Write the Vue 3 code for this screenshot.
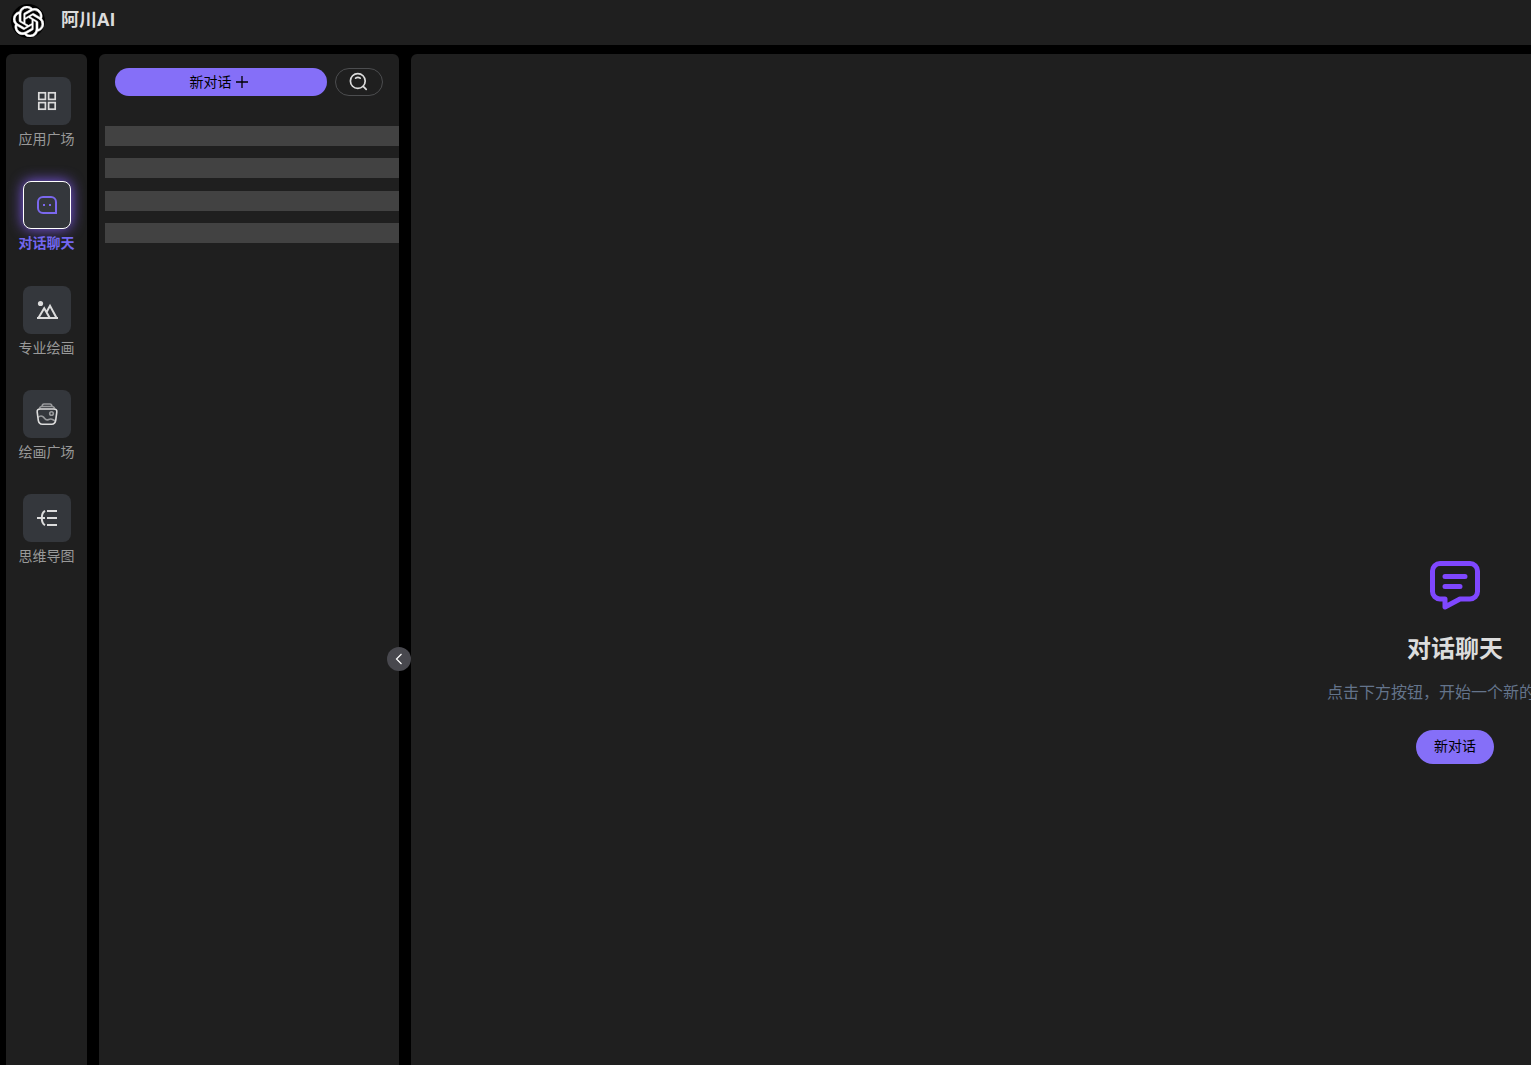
<script setup>
import {ref} from "vue"

const active=ref("chat")
const collapsed=ref(false)

const menus=[
    {key:"apps",label:"应用广场"},
    {key:"chat",label:"对话聊天"},
    {key:"draw",label:"专业绘画"},
    {key:"gallery",label:"绘画广场"},
    {key:"mind",label:"思维导图"},
]
</script>

<template>
    <div class="page">
        <header class="header">
            <span class="logo">
                <svg viewBox="0 0 24 24" width="31" height="31" fill="#fff" stroke="#fff" stroke-width="0.4">
                    <path d="M22.2819 9.8211a5.9847 5.9847 0 0 0-.5157-4.9108 6.0462 6.0462 0 0 0-6.5098-2.9A6.0651 6.0651 0 0 0 4.9807 4.1818a5.9847 5.9847 0 0 0-3.9977 2.9 6.0462 6.0462 0 0 0 .7427 7.0966 5.98 5.98 0 0 0 .511 4.9107 6.051 6.051 0 0 0 6.5146 2.9001A5.9847 5.9847 0 0 0 13.2599 24a6.0557 6.0557 0 0 0 5.7718-4.2058 5.9894 5.9894 0 0 0 3.9977-2.9001 6.0557 6.0557 0 0 0-.7475-7.0729zm-9.022 12.6081a4.4755 4.4755 0 0 1-2.8764-1.0408l.1419-.0804 4.7783-2.7582a.7948.7948 0 0 0 .3927-.6813v-6.7369l2.02 1.1686a.071.071 0 0 1 .038.052v5.5826a4.504 4.504 0 0 1-4.4945 4.4944zm-9.6607-4.1254a4.4708 4.4708 0 0 1-.5346-3.0137l.142.0852 4.783 2.7582a.7712.7712 0 0 0 .7806 0l5.8428-3.3685v2.3324a.0804.0804 0 0 1-.0332.0615L9.74 19.9502a4.4992 4.4992 0 0 1-6.1408-1.6464zM2.3408 7.8956a4.485 4.485 0 0 1 2.3655-1.9728V11.6a.7664.7664 0 0 0 .3879.6765l5.8144 3.3543-2.0201 1.1685a.0757.0757 0 0 1-.071 0l-4.8303-2.7865A4.504 4.504 0 0 1 2.3408 7.872zm16.5963 3.8558L13.1038 8.364 15.1192 7.2a.0757.0757 0 0 1 .071 0l4.8303 2.7913a4.4944 4.4944 0 0 1-.6765 8.1042v-5.6772a.79.79 0 0 0-.407-.667zm2.0107-3.0231l-.142-.0852-4.7735-2.7818a.7759.7759 0 0 0-.7854 0L9.409 9.2297V6.8974a.0662.0662 0 0 1 .0284-.0615l4.8303-2.7866a4.4992 4.4992 0 0 1 6.6802 4.66zM8.3065 12.863l-2.02-1.1638a.0804.0804 0 0 1-.038-.0567V6.0742a4.4992 4.4992 0 0 1 7.3757-3.4537l-.142.0805L8.704 5.459a.7948.7948 0 0 0-.3927.6813zm1.0976-2.3654l2.602-1.4998 2.6069 1.4998v2.9994l-2.5974 1.4997-2.6067-1.4997Z"/>
                </svg>
            </span>
            <h1 class="brand">阿川AI</h1>
        </header>

        <div class="body">
            <aside class="sidebar">
                <nav class="menu">
                    <button v-for="m in menus" :key="m.key" type="button" class="menu-item" :class="{active:active===m.key}" @click="active=m.key">
                        <span class="tile">
                            <svg v-if="m.key==='apps'" viewBox="0 0 24 24" width="24" height="24" fill="none" stroke="currentColor" stroke-width="1.7">
                                <rect x="3.8" y="3.8" width="6.6" height="6.6"/>
                                <rect x="13.6" y="3.8" width="6.6" height="6.6"/>
                                <rect x="3.8" y="13.6" width="6.6" height="6.6"/>
                                <rect x="13.6" y="13.6" width="6.6" height="6.6"/>
                            </svg>
                            <svg v-else-if="m.key==='chat'" viewBox="0 0 24 24" width="24" height="24" fill="none" stroke="currentColor" stroke-width="2">
                                <path d="M8 4h8a5 5 0 0 1 5 5v11H8a5 5 0 0 1-5-5V9a5 5 0 0 1 5-5z"/>
                                <path d="M8 12h2M14 12h2"/>
                            </svg>
                            <svg v-else-if="m.key==='draw'" viewBox="0 0 24 24" width="24" height="24" fill="none" stroke="currentColor" stroke-width="2">
                                <circle cx="5.5" cy="5.5" r="2.6" fill="currentColor" stroke="none"/>
                                <path d="M3.4 20 9.2 10.2 14.8 20M11.6 13.9 15 7.8 21.6 20M2 20h21"/>
                            </svg>
                            <svg v-else-if="m.key==='gallery'" viewBox="0 0 24 24" width="24" height="24" fill="none" stroke="currentColor" stroke-width="1.6">
                                <path d="M5.2 7h13.6c2.3 0 3.3 1.1 3 3.2l-1.1 8.2c-.4 2.6-1.5 3.8-4 3.8H7.3c-2.5 0-3.6-1.2-4-3.8L2.2 10.2C1.9 8.1 2.9 7 5.2 7z"/>
                                <g opacity="0.6">
                                    <path d="M4.5 6.5C4.8 5 5.600 4.500 7 4.500h10c1.400 0 2.200.5 2.500 2M7 4.200c.2-1.500.8-2.200 2-2.200h6c1.200 0 1.800.7 2 2.200"/>
                                    <circle cx="16.5" cy="11.5" r="1.8"/>
                                    <path d="M3 15.500c1.500-1.500 3.700-1.800 5.200-.6 1.500 1.300 2 3 3.800 3 1.500 0 2-.9 3.600-.9 1.800 0 2.600 1 4.900 2"/>
                                </g>
                            </svg>
                            <svg v-else viewBox="0 0 24 24" width="24" height="24" fill="none" stroke="currentColor" stroke-width="2">
                                <path d="M12 5h10M12 12h10M12 19h10M2 12h8"/>
                                <path d="M10 4.8C7.8 6 6.8 8.500 6.800 12s1 6 3.200 7.200"/>
                            </svg>
                        </span>
                        <span class="label">{{m.label}}</span>
                    </button>
                </nav>
            </aside>

            <section class="history" v-show="!collapsed">
                <div class="tools">
                    <button type="button" class="new-chat">
                        <span class="text">新对话</span>
                        <svg viewBox="0 0 14 14" width="14" height="14" fill="none" stroke="currentColor" stroke-width="1.3">
                            <path d="M7 1v12M1 7h12"/>
                        </svg>
                    </button>
                    <button type="button" class="search" aria-label="搜索">
                        <svg viewBox="0 0 20 20" width="20" height="20" fill="none" stroke="currentColor" stroke-width="1.7" stroke-linecap="round">
                            <circle cx="8.8" cy="9" r="7.4"/>
                            <path d="M14.2 14.4l3 3"/>
                            <path d="M6.600 6.200c1.400-1.100 3.200-1.100 4.600 0"/>
                        </svg>
                    </button>
                </div>
                <div class="skeleton">
                    <div v-for="n in 4" :key="n" class="bar"></div>
                </div>
                <button type="button" class="handle" aria-label="收起" @click="collapsed=true">
                    <svg viewBox="0 0 12 12" width="12" height="12" fill="none" stroke="currentColor" stroke-width="1.2">
                        <path d="M8.500 1 3.500 6l5 5"/>
                    </svg>
                </button>
            </section>

            <main class="content">
                <div class="stage">
                    <svg viewBox="0 0 60 60" width="60" height="60" fill="none" stroke="#7f47ff" stroke-width="5" stroke-linecap="round" stroke-linejoin="round">
                        <path d="M15 7.500h30a7.500 7.500 0 0 1 7.500 7.500v20.500a7.500 7.500 0 0 1-7.500 7.500H35L20 51V43h-5a7.500 7.500 0 0 1-7.500-7.500V15a7.500 7.500 0 0 1 7.500-7.500z"/>
                        <path d="M20 20.500h20M20 30.500h15"/>
                    </svg>
                    <h2 class="title">对话聊天</h2>
                    <p class="tip">点击下方按钮，开始一个新的对话吧</p>
                    <button type="button" class="start">新对话</button>
                </div>
            </main>
        </div>
    </div>
</template>

<style>
body{
    margin: 0;
    background: #000;
}
</style>

<style scoped>
.page{
    height: 100vh;
    display: flex;
    flex-direction: column;
    overflow: hidden;
    background: #000;
    color: #dcdcdc;
    font-family: "Open Sans","Noto Sans CJK SC",sans-serif;
}
button{
    padding: 0;
    border: none;
    background: none;
    font-family: inherit;
    font-size: 14px;
    cursor: pointer;
}
svg{
    display: block;
}
.header{
    flex: none;
    height: 45px;
    padding-left: 11px;
    display: flex;
    gap: 16px;
    background: #1f1f1f;
}
.logo{
    width: 34px;
    height: 34px;
    margin-top: 4px;
    display: flex;
    align-items: center;
    justify-content: center;
    border-radius: 50%;
    background: #000;
}
.brand{
    margin: 0;
    font-size: 18px;
    line-height: 38px;
}
.body{
    flex: 1;
    min-height: 0;
    display: flex;
    gap: 12px;
    padding: 9px 0 0 6px;
}
.sidebar,
.history,
.content{
    border-radius: 6px 6px 0 0;
    background: #1f1f1f;
}
.sidebar{
    flex: none;
    width: 81px;
    padding-top: 23px;
    box-sizing: border-box;
}
/* 菜单项在固定高度内均匀分布 */
.menu{
    height: 489px;
    display: flex;
    flex-direction: column;
    justify-content: space-between;
}
.menu-item{
    display: flex;
    flex-direction: column;
    align-items: center;
    gap: 4px;
    color: #999;
}
.tile{
    width: 48px;
    height: 48px;
    display: flex;
    align-items: center;
    justify-content: center;
    box-sizing: border-box;
    border-radius: 8px;
    background: #34373c;
    color: #dcdcdc;
}
.label{
    line-height: 20px;
}
.active .tile{
    border: 1px solid #fff;
    color: #7b68ee;
    box-shadow: 0 0 14px #7f5af0;
}
.active .label{
    color: #7367f0;
    font-weight: bold;
}
.history{
    position: relative;
    flex: none;
    width: 300px;
}
.tools{
    display: flex;
    gap: 8px;
    padding: 14px 16px 30px;
}
.new-chat{
    flex: 1;
    height: 28px;
    padding-right: 4px;
    display: flex;
    align-items: center;
    justify-content: center;
    gap: 3px;
    border-radius: 14px;
    background: #856ff8;
    color: #000;
}
.text{
    padding-bottom: 3px;
}
.search{
    width: 48px;
    height: 28px;
    display: flex;
    align-items: center;
    justify-content: center;
    border: 1px solid #4c4d4f;
    border-radius: 14px;
    color: #dcdcdc;
}
.skeleton{
    height: 117px;
    margin-left: 6px;
    display: flex;
    flex-direction: column;
    justify-content: space-between;
}
.bar{
    height: 20px;
    background: #424242;
}
.handle{
    position: absolute;
    bottom: 39%;
    right: -12px;
    width: 24px;
    height: 24px;
    display: flex;
    align-items: center;
    justify-content: center;
    border-radius: 50%;
    background: #48484e;
    color: #fff;
}
.content{
    flex: 1;
    min-width: 0;
    overflow: hidden;
    border-top-right-radius: 0;
}
/* 欢迎区比可视区域宽,右侧被裁掉 */
.stage{
    width: calc(200% - 152px);
    height: calc(120% - 2px);
    display: flex;
    flex-direction: column;
    align-items: center;
    justify-content: center;
}
.title{
    margin: 14px 0 0;
    font-size: 24px;
    line-height: 36px;
}
.tip{
    margin: 12px 0 24px;
    color: #64748b;
    font-size: 16px;
    line-height: 28px;
}
.start{
    height: 34px;
    padding: 0 18px 4px;
    border-radius: 17px;
    background: #856ff8;
    color: #000;
}
</style>
